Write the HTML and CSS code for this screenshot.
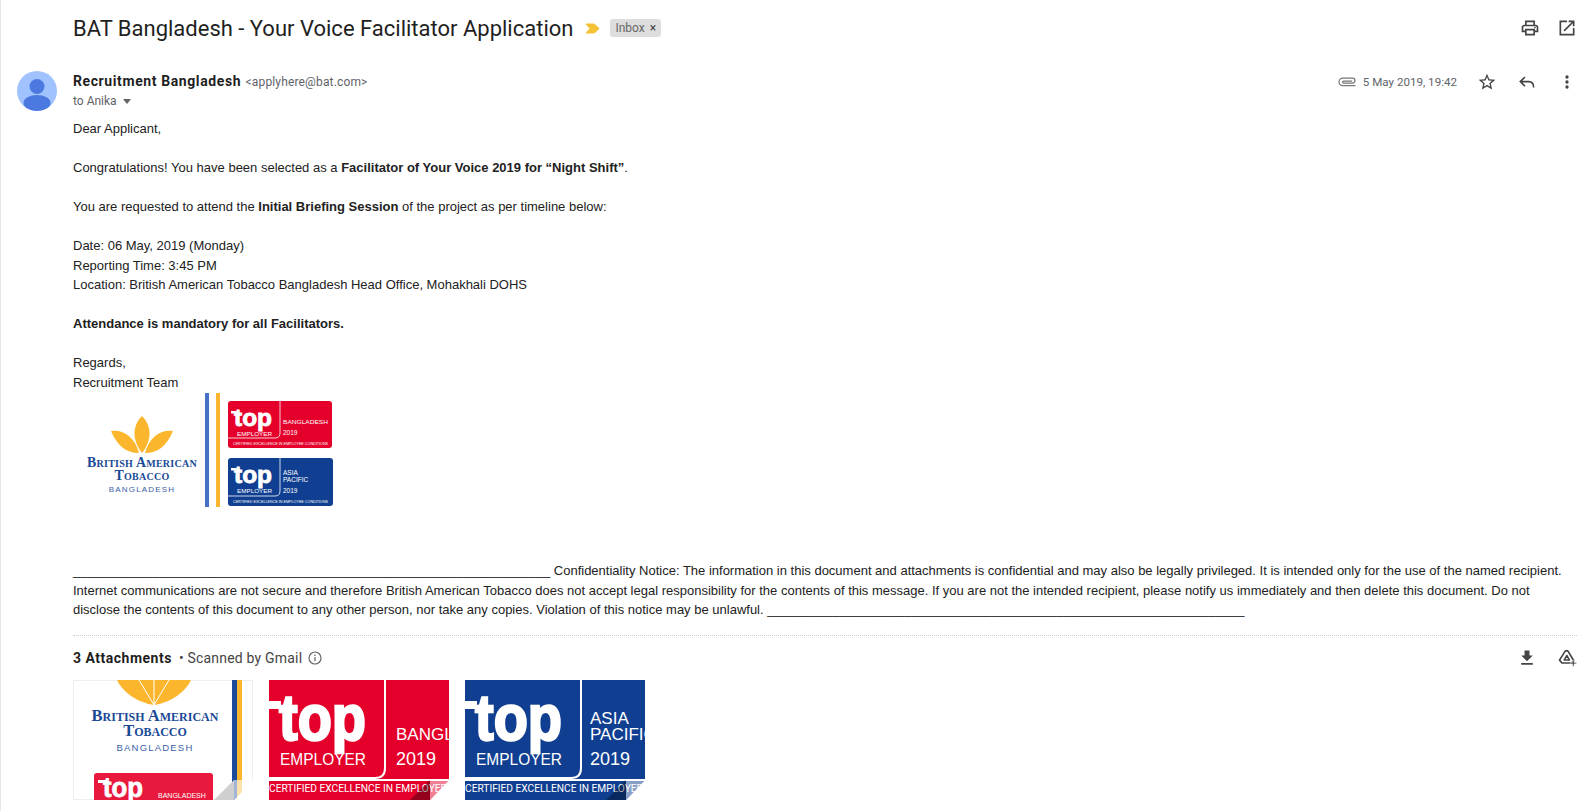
FILE: index.html
```html
<!DOCTYPE html>
<html lang="en">
<head>
    <meta charset="UTF-8">
    <title>BAT Bangladesh - Your Voice Facilitator Application</title>
    <link rel="stylesheet" href="styles.css">
</head>
<body>
<div class="mail">
    <header class="subject-row">
        <h1 class="subject">BAT Bangladesh - Your Voice Facilitator Application</h1>
        <svg class="marker" width="15" height="11" viewBox="0 0 15 11"><path d="M1 1h7.500q1 0 1.800.8L14 5.500l-3.700 3.700q-.8.8-1.800.8H1l4-4.500z" fill="#f4c233" stroke="#f4c233"/></svg>
        <span class="label">Inbox <span class="label-x">×</span></span>
        <div class="subject-actions">
            <svg class="icon" viewBox="0 0 24 24"><path fill="#444" d="M19 8h-1V3H6v5H5c-1.660 0-3 1.340-3 3v6h4v4h12v-4h4v-6c0-1.660-1.340-3-3-3zM8 5h8v3H8V5zm8 14H8v-4h8v4zm2-4v-2H6v2H4v-4c0-.550.450-1 1-1h14c.550 0 1 .450 1 1v4h-2z"/><circle cx="18" cy="11.500" r="1" fill="#444"/></svg>
            <svg class="icon" viewBox="0 0 24 24"><path fill="#444" d="M19 19H5V5h7V3H3v18h18v-9h-2v7zM14 3v2h3.590l-9.830 9.830 1.410 1.410L19 6.410V10h2V3h-7z"/></svg>
        </div>
    </header>

    <div class="message-head">
        <svg class="avatar" width="40" height="40" viewBox="0 0 40 40">
            <defs><clipPath id="avatarClip"><circle cx="20" cy="20" r="20"/></clipPath></defs>
            <g clip-path="url(#avatarClip)">
                <rect width="40" height="40" fill="#a0c3ff"/>
                <circle cx="20" cy="15.500" r="7.500" fill="#4b79e0"/>
                <ellipse cx="20" cy="32" rx="13.500" ry="8" fill="#4b79e0"/>
            </g>
        </svg>
        <div class="sender">
            <div class="sender-line"><span class="sender-name">Recruitment Bangladesh</span> <span class="sender-mail">&lt;applyhere@bat.com&gt;</span></div>
            <div class="to-line">to Anika <span class="caret"></span></div>
        </div>
        <div class="message-meta">
            <svg class="clip" width="20" height="12" viewBox="0 0 20 12"><path fill="none" stroke="#777" stroke-width="1.200" d="M18.500 9.700H5.800a3.800 3.800 0 0 1 0-7.600h9.700a2.500 2.500 0 0 1 0 5H6.500a1 1 0 0 1 0-2H15"/></svg>
            <span class="date">5 May 2019, 19:42</span>
            <svg class="icon star" viewBox="0 0 24 24"><path fill="#444" d="M22 9.240l-7.190-.620L12 2 9.190 8.630 2 9.240l5.460 4.730L5.820 21 12 17.270 18.180 21l-1.630-7.030L22 9.240zM12 15.400l-3.760 2.270 1-4.280-3.320-2.880 4.380-.380L12 6.100l1.710 4.040 4.380.380-3.320 2.880 1 4.280L12 15.400z"/></svg>
            <svg class="icon" viewBox="0 0 24 24"><path fill="none" stroke="#444" stroke-width="2" d="M9.500 6L4 11.500l5.500 5.500M4 11.500h10c3.500 0 6 2.500 6 7"/></svg>
            <svg class="icon" viewBox="0 0 24 24"><circle cx="12" cy="6" r="2" fill="#444"/><circle cx="12" cy="12" r="2" fill="#444"/><circle cx="12" cy="18" r="2" fill="#444"/></svg>
        </div>
    </div>

    <div class="body-text">
        <p>Dear Applicant,</p>
        <p>Congratulations! You have been selected as a <b>Facilitator of Your Voice 2019 for “Night Shift”</b>.</p>
        <p>You are requested to attend the <b>Initial Briefing Session</b> of the project as per timeline below:</p>
        <p>Date: 06 May, 2019 (Monday)<br>Reporting Time: 3:45 PM<br>Location: British American Tobacco Bangladesh Head Office, Mohakhali DOHS</p>
        <p><b>Attendance is mandatory for all Facilitators.</b></p>
        <p class="sign">Regards,<br>Recruitment Team</p>

        <svg class="signature" width="260" height="114" viewBox="0 0 260 114">
            <g fill="#fbb62e">
                <path d="M69 23C60 32 58 46 69 60 80 46 78 32 69 23z"/>
                <path d="M38 38C50 36 62 44 66 60 52 60 44 52 38 38z"/>
                <path d="M100 38C88 36 76 44 72 60 86 60 94 52 100 38z"/>
            </g>
            <g fill="#1a4a96" text-anchor="middle" class="logo-text">
                <text x="69" y="74" font-size="13.800" letter-spacing=".25">British American</text>
                <text x="69" y="87" font-size="13.800" letter-spacing=".25">Tobacco</text>
                <text class="logo-sub" x="69" y="99" font-size="8" fill="#3a5ea6">BANGLADESH</text>
            </g>
            <rect x="132" width="4" height="114" fill="#4472c4"/>
            <rect x="143" width="4" height="114" fill="#fbb62e"/>
            <g class="badge">
                <rect x="155" y="8" width="104" height="47" rx="3" fill="#e4002b"/>
                <path d="M155 45h47q5 0 5-5V8" fill="none" stroke="#fff" stroke-width=".8"/>
                <rect x="158" y="18" width="5" height="2.500" fill="#fff"/>
                <text class="top-mark small" x="161" y="33" font-size="23" fill="#fff" stroke="#fff" textLength="38" lengthAdjust="spacingAndGlyphs">top</text>
                <text x="164" y="43" font-size="6" fill="#fff" textLength="35" lengthAdjust="spacingAndGlyphs">EMPLOYER</text>
                <text x="210" y="31" font-size="6" fill="#fff" textLength="45" lengthAdjust="spacingAndGlyphs">BANGLADESH</text>
                <text x="210" y="42" font-size="6.500" fill="#fff">2019</text>
                <text x="160" y="52" font-size="3.600" fill="#fff" textLength="95" lengthAdjust="spacingAndGlyphs">CERTIFIED EXCELLENCE IN EMPLOYEE CONDITIONS</text>
            </g>
            <g class="badge">
                <rect x="155" y="65" width="105" height="48" rx="3" fill="#103f91"/>
                <path d="M155 103h47q5 0 5-5V65" fill="none" stroke="#fff" stroke-width=".8"/>
                <rect x="158" y="75" width="5" height="2.500" fill="#fff"/>
                <text class="top-mark small" x="161" y="90" font-size="23" fill="#fff" stroke="#fff" textLength="38" lengthAdjust="spacingAndGlyphs">top</text>
                <text x="164" y="100" font-size="6" fill="#fff" textLength="35" lengthAdjust="spacingAndGlyphs">EMPLOYER</text>
                <text x="210" y="82" font-size="6.500" fill="#fff">ASIA</text>
                <text x="210" y="89" font-size="6.500" fill="#fff">PACIFIC</text>
                <text x="210" y="100" font-size="6.500" fill="#fff">2019</text>
                <text x="160" y="110" font-size="3.600" fill="#fff" textLength="95" lengthAdjust="spacingAndGlyphs">CERTIFIED EXCELLENCE IN EMPLOYEE CONDITIONS</text>
            </g>
        </svg>

        <p class="notice">__________________________________________________________________ Confidentiality Notice: The information in this document and attachments is confidential and may also be legally privileged. It is intended only for the use of the named recipient. Internet communications are not secure and therefore British American Tobacco does not accept legal responsibility for the contents of this message. If you are not the intended recipient, please notify us immediately and then delete this document. Do not disclose the contents of this document to any other person, nor take any copies. Violation of this notice may be unlawful. __________________________________________________________________</p>
    </div>

    <div class="attachments">
        <div class="attach-head">
            <span class="attach-count">3 Attachments</span>
            <span class="attach-scan">• Scanned by Gmail</span>
            <svg class="info" width="14" height="14" viewBox="0 0 14 14"><circle cx="7" cy="7" r="6" fill="none" stroke="#666" stroke-width="1.200"/><path d="M6.400 6h1.200v4.200H6.400zM6.400 3.600h1.200v1.300H6.400z" fill="#666"/></svg>
            <div class="attach-actions">
                <svg class="icon" viewBox="0 0 24 24"><path fill="#444" d="M19 9h-4V3H9v6H5l7 7 7-7zM5 18v2h14v-2H5z"/></svg>
                <svg class="icon" viewBox="0 0 24 24"><path fill="none" stroke="#444" stroke-width="2" stroke-linejoin="round" d="M10 3.500h3l7 11.500-1.500 3H6l-3-3.500L10 3.500z"/><path fill="none" stroke="#444" stroke-width="1.800" stroke-linejoin="round" d="M8.500 14.500l3.300-5.500 3.200 5.500z"/><path fill="#444" d="M18.800 14.500h1.700v2.800h2.800V19h-2.800v2.800h-1.700V19H16v-1.700h2.800z" stroke="#fff" stroke-width=".5"/></svg>
            </div>
        </div>
        <div class="thumbs">
            <svg class="thumb" width="180" height="120" viewBox="0 0 180 120">
                <rect x=".5" y=".5" width="179" height="119" fill="#fff" stroke="#eee"/>
                <path d="M44 0h74c-6 13-22 23-37 25-15-2-31-12-37-25z" fill="#fbb62e"/>
                <path d="M81 25V0M66 0l15 25M96 0L81 25" stroke="#fff" stroke-width="1"/>
                <g fill="#1a4a96" text-anchor="middle" class="logo-text">
                    <text x="82" y="41" font-size="16.500">British American</text>
                    <text x="82" y="56" font-size="16.500">Tobacco</text>
                    <text class="logo-sub" x="82" y="71" font-size="9.500" fill="#3a5ea6">BANGLADESH</text>
                </g>
                <rect x="159" width="5" height="120" fill="#1b4a9c"/>
                <rect x="164" width="5" height="120" fill="#fbb62e"/>
                <path d="M21 120V96q0-3 3-3h113q3 0 3 3v24z" fill="#e8193c"/>
                <rect x="25" y="100" width="8" height="3" fill="#fff"/>
                <text class="top-mark small" x="30" y="117" font-size="28" fill="#fff" stroke="#fff" textLength="40" lengthAdjust="spacingAndGlyphs">top</text>
                <text class="badge-text" x="85" y="118" font-size="7" fill="#fff">BANGLADESH</text>
                <path d="M141 120l20-20v20z" fill="#cfcfcf"/>
                <path d="M161 100h19l-19 20z" fill="#fff" opacity=".6"/>
                <path d="M161 120l19-20v20z" fill="#fff"/>
            </svg>
            <svg class="thumb" width="180" height="120" viewBox="0 0 180 120">
                <rect width="180" height="120" fill="#e4002b"/>
                <path d="M0 98h106q10 0 10-10V0M0 100h180" fill="none" stroke="#fff" stroke-width="2"/>
                <rect y="21" width="12" height="8" fill="#fff"/>
                <text class="top-mark" x="10" y="60" font-size="64" fill="#fff" stroke="#fff" textLength="87" lengthAdjust="spacingAndGlyphs">top</text>
                <text class="badge-text" x="11" y="85" font-size="16.500" fill="#fff" textLength="86" lengthAdjust="spacingAndGlyphs">EMPLOYER</text>
                <text class="badge-text" x="127" y="60" font-size="17" fill="#fff">BANGLADESH</text>
                <text class="badge-text" x="127" y="85" font-size="18" fill="#fff">2019</text>
                <text class="cert-text" x="0" y="112" font-size="10.200" fill="#fff">CERTIFIED EXCELLENCE IN EMPLOYEE CONDITIONS</text>
                <path d="M141 120l20-20v20z" fill="#000" opacity=".35"/>
                <path d="M161 100h19l-19 20z" fill="#fff" opacity=".5"/>
                <path d="M161 120l19-20v20z" fill="#fff"/>
            </svg>
            <svg class="thumb" width="180" height="120" viewBox="0 0 180 120">
                <rect width="180" height="120" fill="#103f91"/>
                <path d="M0 98h106q10 0 10-10V0M0 100h180" fill="none" stroke="#fff" stroke-width="2"/>
                <rect y="21" width="12" height="8" fill="#fff"/>
                <text class="top-mark" x="10" y="60" font-size="64" fill="#fff" stroke="#fff" textLength="87" lengthAdjust="spacingAndGlyphs">top</text>
                <text class="badge-text" x="11" y="85" font-size="16.500" fill="#fff" textLength="86" lengthAdjust="spacingAndGlyphs">EMPLOYER</text>
                <text class="badge-text" x="125" y="44" font-size="17" fill="#fff">ASIA</text>
                <text class="badge-text" x="125" y="60" font-size="17" fill="#fff">PACIFIC</text>
                <text class="badge-text" x="125" y="85" font-size="18" fill="#fff">2019</text>
                <text class="cert-text" x="0" y="112" font-size="10.200" fill="#fff">CERTIFIED EXCELLENCE IN EMPLOYEE CONDITIONS</text>
                <path d="M141 120l20-20v20z" fill="#000" opacity=".35"/>
                <path d="M161 100h19l-19 20z" fill="#fff" opacity=".5"/>
                <path d="M161 120l19-20v20z" fill="#fff"/>
            </svg>
        </div>
    </div>
</div>
</body>
</html>
```

FILE: styles.css
```css
body {
    margin: 0;
    background: #fff;
    font-family: "Liberation Sans", Arial, sans-serif;
    color: #222;
    overflow: hidden;
}
.mail {
    height: 811px;
    box-sizing: border-box;
    border-left: 1px solid #e8e8e8;
    padding: 0 12px 0 16px;
}
svg {
    display: block;
    flex: none;
}
.icon {
    width: 20px;
    height: 20px;
}
/* Subject line */
.subject-row {
    display: flex;
    align-items: center;
    height: 56px;
    padding-left: 56px;
}
.subject {
    margin: 0;
    font: 400 22px Roboto, Arial, sans-serif;
    color: #1f1f1f;
}
.marker {
    margin-left: 12px;
}
.label {
    margin-left: 10px;
    padding: 2px 5px;
    border-radius: 3px;
    background: #ddd;
    color: #666;
    font: 12px Roboto, Arial, sans-serif;
}
.label-x {
    margin-left: 2px;
    color: #444;
}
.subject-actions {
    display: flex;
    gap: 17px;
    margin-left: auto;
}
/* Sender */
.message-head {
    display: flex;
    margin-top: 15px;
    height: 48px;
}
.sender {
    margin-left: 16px;
}
.sender-line {
    line-height: 20px;
}
.sender-name {
    font: 700 14px Roboto, Arial, sans-serif;
    letter-spacing: .6px;
    color: #1f1f1f;
}
.sender-mail {
    font: 12px Roboto, Arial, sans-serif;
    letter-spacing: .15px;
    color: #5f6368;
}
.to-line {
    display: flex;
    align-items: center;
    font: 12px/20px Roboto, Arial, sans-serif;
    color: #5f6368;
}
.caret {
    margin-left: 6px;
    border: 4px solid transparent;
    border-top: 5px solid #5f6368;
    border-bottom: 0;
}
.message-meta {
    display: flex;
    align-items: center;
    align-self: flex-start;
    height: 20px;
    margin-left: auto;
    padding-top: 1px;
}
.date {
    margin-left: 6px;
    font: 11.600px Roboto, Arial, sans-serif;
    color: #5f6368;
}
.star {
    margin-left: 20px;
}
.message-meta .icon + .icon {
    margin-left: 20px;
}
/* Mail body */
.body-text {
    margin-left: 56px;
    font-size: 13px;
    line-height: 19.500px;
    color: #222;
}
.body-text p {
    margin: 0 0 19.500px;
}
.body-text .sign {
    margin-bottom: 0;
}
.signature {
    margin-top: 1px;
}
.body-text .notice {
    margin: 54px 0 0;
}
/* Logos inside the signature and thumbnails */
.logo-text text {
    font-family: "Liberation Serif", serif;
    font-weight: 700;
    font-variant: small-caps;
}
.logo-text .logo-sub {
    font-family: "Liberation Sans", sans-serif;
    font-weight: 400;
    font-variant: normal;
    letter-spacing: 1.200px;
}
.badge text, .badge-text {
    font-family: "Liberation Sans", sans-serif;
}
.cert-text {
    font-family: Roboto, sans-serif;
}
.badge .top-mark, .top-mark {
    font-family: "Liberation Sans", sans-serif;
    font-weight: 700;
    stroke-width: 2.500px;
}
.badge .top-mark.small, .top-mark.small {
    stroke-width: .8px;
}
/* Attachments */
.attachments {
    margin: 15px 0 0 56px;
    padding-top: 12px;
    border-top: 1px dotted #ccc;
}
.attach-head {
    display: flex;
    align-items: center;
    height: 20px;
    font: 14px Roboto, Arial, sans-serif;
}
.attach-count {
    font-weight: 700;
    letter-spacing: .5px;
    color: #1f1f1f;
}
.attach-scan {
    margin-left: 7px;
    letter-spacing: .2px;
    color: #444;
}
.info {
    margin-left: 6px;
}
.attach-actions {
    display: flex;
    gap: 20px;
    margin-left: auto;
}
.thumbs {
    display: flex;
    gap: 16px;
    margin-top: 12px;
}
```
